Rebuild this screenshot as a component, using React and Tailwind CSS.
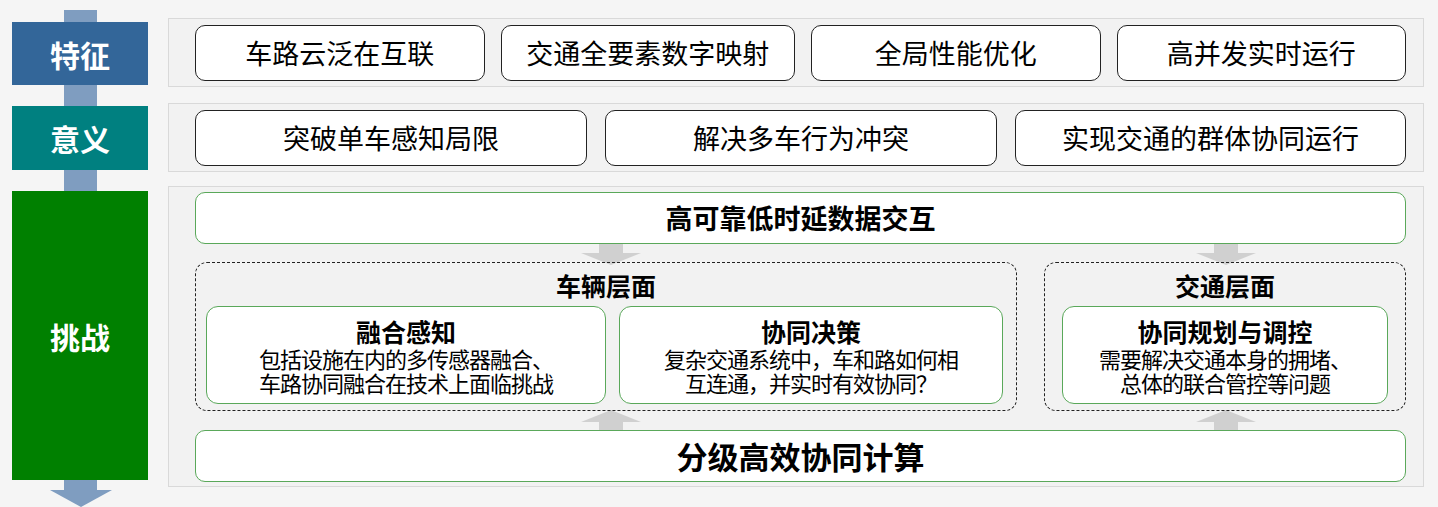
const font = { fontFamily: '"Noto Sans CJK SC", "Noto Sans", sans-serif' };

function Pill({ children, className = '' }) {
  return (
    <div className={`flex items-center justify-center bg-white border border-[#222] rounded-[10px] text-[27px] leading-[32px] text-black ${className}`}>
      {children}
    </div>
  );
}

function DownArrow({ className = '' }) {
  return (
    <svg className={`absolute ${className}`} width="64" height="22" viewBox="0 0 64 22">
      <path d="M20 0 H44 V10 H62 L32 22 L2 10 H20 Z" fill="#d0d0d0" />
    </svg>
  );
}

function UpArrow({ className = '' }) {
  return (
    <svg className={`absolute ${className}`} width="64" height="22" viewBox="0 0 64 22">
      <path d="M20 22 H44 V12 H62 L32 0 L2 12 H20 Z" fill="#d0d0d0" />
    </svg>
  );
}

function Card({ title, lines, className = '' }) {
  return (
    <div className={`flex flex-col items-center justify-center bg-white border border-[#5aa85a] rounded-[12px] ${className}`}>
      <div className="text-[25px] font-bold leading-[30px]">{title}</div>
      {lines.map(l => <div key={l} className="text-[22px] leading-[24px] tracking-[-1px]">{l}</div>)}
    </div>
  );
}

export default function App() {
  return (
    <div style={font} className="relative w-[1438px] h-[507px] bg-[#f5f5f5] overflow-hidden text-black">
      <div className="absolute left-[64px] top-[10px] w-[33px] h-[482px] bg-[#7f9dc0]" />
      <svg className="absolute left-[50px] top-[490px]" width="62" height="17" viewBox="0 0 62 17">
        <path d="M0 0 H62 L31 17 Z" fill="#7f9dc0" />
      </svg>

      <div className="relative flex gap-[20px] pt-[18px] pl-[12px]">
        <div className="flex flex-col w-[136px] text-white text-[30px] leading-[36px] font-bold">
          <div className="mt-[4px] h-[63px] bg-[#336699] flex items-center justify-center">特征</div>
          <div className="mt-[21px] h-[64px] bg-[#008080] flex items-center justify-center">意义</div>
          <div className="mt-[21px] h-[289px] bg-[#008000] flex items-center justify-center">挑战</div>
        </div>

        <div className="flex flex-col w-[1256px]">
          <div className="h-[69px] bg-[#f2f2f2] border border-[#d9d9d9] flex items-center gap-[16px] pl-[26px] pr-[17px]">
            <Pill className="w-[290px] h-[56px]">车路云泛在互联</Pill>
            <Pill className="w-[295px] h-[56px]">交通全要素数字映射</Pill>
            <Pill className="w-[290px] h-[56px]">全局性能优化</Pill>
            <Pill className="w-[290px] h-[56px]">高并发实时运行</Pill>
          </div>

          <div className="mt-[16px] h-[69px] bg-[#f2f2f2] border border-[#d9d9d9] flex items-center gap-[18px] pl-[26px] pr-[17px]">
            <Pill className="w-[392px] h-[56px]">突破单车感知局限</Pill>
            <Pill className="w-[392px] h-[56px]">解决多车行为冲突</Pill>
            <Pill className="w-[391px] h-[56px]">实现交通的群体协同运行</Pill>
          </div>

          <div className="relative mt-[14px] h-[301px] bg-[#f2f2f2] border border-[#d9d9d9] pl-[26px] pr-[17px] pt-[5px] flex flex-col">
            <DownArrow className="left-[410px] top-[56px]" />
            <DownArrow className="left-[1025px] top-[56px]" />
            <UpArrow className="left-[410px] top-[223px]" />
            <UpArrow className="left-[1025px] top-[223px]" />

            <div className="relative h-[52px] bg-white border border-[#5aa85a] rounded-[10px] flex items-center justify-center text-[27px] leading-[32px] font-bold">
              高可靠低时延数据交互
            </div>

            <div className="relative mt-[18px] flex gap-[27px]">
              <div className="w-[823px] h-[149px] border-[1.5px] border-dashed border-[#222] rounded-[12px] px-[10px] pt-[4px]">
                <div className="text-center text-[25px] font-bold leading-[36px]">车辆层面</div>
                <div className="flex gap-[13px] mt-[3px]">
                  <Card className="w-[400px] h-[98px]" title="融合感知" lines={['包括设施在内的多传感器融合、', '车路协同融合在技术上面临挑战']} />
                  <Card className="w-[384px] h-[98px]" title="协同决策" lines={['复杂交通系统中，车和路如何相', '互连通，并实时有效协同？']} />
                </div>
              </div>
              <div className="w-[362px] h-[149px] border-[1.5px] border-dashed border-[#222] rounded-[12px] px-[17px] pt-[4px]">
                <div className="text-center text-[25px] font-bold leading-[36px]">交通层面</div>
                <Card className="mt-[3px] w-[326px] h-[98px]" title="协同规划与调控" lines={['需要解决交通本身的拥堵、', '总体的联合管控等问题']} />
              </div>
            </div>

            <div className="relative mt-[19px] h-[52px] bg-white border border-[#5aa85a] rounded-[10px] flex items-center justify-center text-[31px] leading-[36px] font-bold">
              分级高效协同计算
            </div>
          </div>
        </div>
      </div>
    </div>
  );
}
